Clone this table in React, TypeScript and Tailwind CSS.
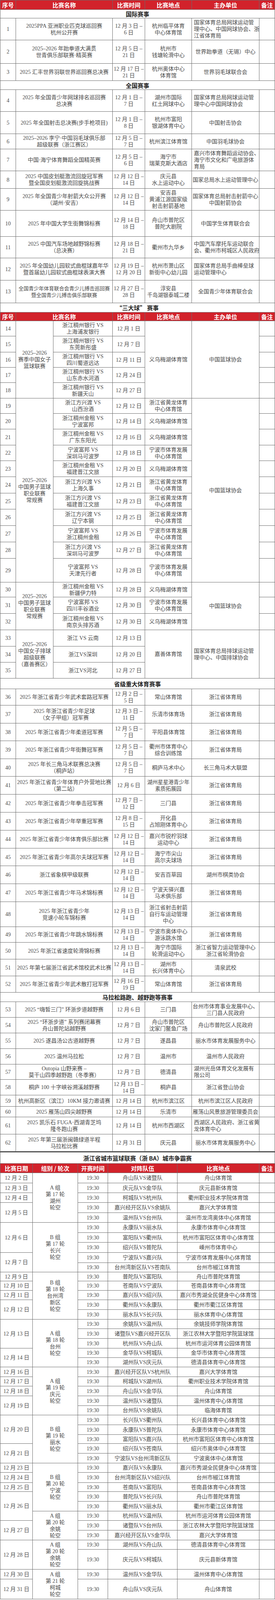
type Cell = { t: string; cs?: number; rs?: number; left?: boolean; sz?: string };
type Row = { h: number; kind?: "head" | "sec"; cells: Cell[] };

// the page window is 4096px tall, the sheet is 4487px: squeeze row heights to fit
const K = 4096 / 4487;

const c = (t: string, o: Omit<Cell, "t"> = {}): Cell => ({ t, ...o });
const N = (o: Omit<Cell, "t"> = {}): Cell => c("", o);

// plain row: number, name over two columns, time, venue, organiser, note
function std(
  h: number,
  no: string,
  name: string,
  time: string,
  venue: string,
  org: string,
  o: { left?: boolean; nameSz?: string; venueSz?: string; orgSz?: string } = {}
): Row {
  return {
    h,
    cells: [
      c(no),
      c(name, { cs: 2, sz: o.nameSz }),
      c(time),
      c(venue, { sz: o.venueSz }),
      c(org, { left: o.left, sz: o.orgSz }),
      N(),
    ],
  };
}

const head = (h: number): Row => ({
  h,
  kind: "head",
  cells: [c("序号"), c("比赛名称", { cs: 2 }), c("比赛时间"), c("比赛地点"), c("主办单位"), c("备注")],
});
const sec = (h: number, t: string, cs = 7): Row => ({ h, kind: "sec", cells: [c(t, { cs })] });

const G1 = "2025–2026\n赛季中国女子\n篮球联赛";
const G2 = "2025–2026\n中国男子篮球\n职业联赛\n常规赛";
const G3 = "2025–2026\n中国女子排球\n超级联赛\n（嘉善赛区）";
const YW = "义乌梅湖体育馆";
const HL = "浙江省黄龙体育\n中心体育馆";
const NB = "宁波市体育发展\n中心体育馆";
const JU = "浙江省体育局";
const D1214 = "12 月 12 日 –\n14 日";
const D1314 = "12 月 13 日 –\n14 日";

const mainRows: Row[] = [
  head(26),
  sec(24, "国际赛事"),
  std(62, "1", "2025PPA 亚洲职业匹克球巡回赛\n杭州公开赛", "12 月 3 日 –\n6 日", "杭州临平体育\n中心体育馆", "国家体育总局网球运动管\n理中心、中国网球协会、浙\n江省体育局", { left: true }),
  std(66, "2", "2025–2026 年跆拳道大满贯\n世青俱乐部联赛·精英赛", "12 月 5 日 –\n21 日", "杭州市\n钱塘轮滑中心", "世界跆拳道（无锡）中心"),
  std(48, "3", "2025 汇丰世界羽联世界巡回赛总决赛", "12 月 17 日 –\n21 日", "杭州奥体中心\n体育馆", "世界羽毛球联合会"),
  sec(25, "全国赛事"),
  std(61, "4", "2025 年全国青少年网球排名巡回赛\n总决赛", "12 月 1 日 –\n7 日", "湖州市国际\n红土网球中心", "国家体育总局网球运动管\n理中心中国网球协会", { left: true }),
  std(63, "5", "2025 年全国射击总决赛(步手枪项目)", "12 月 1 日 –\n8 日", "杭州市富阳\n银湖体育中心", "中国射击协会"),
  std(42, "6", "2025–2026 李宁·中国羽毛球俱乐部\n超级联赛（浙江赛区）", "12 月 5 日 –\n7 日", "杭州滨江体育馆", "中国羽毛球协会"),
  std(62, "7", "中国·海宁体育舞蹈全国精英赛", "12 月 5 日 –\n6 日", "海宁市\n瑞莱克斯大酒店", "嘉兴市体育舞蹈运动协会、\n海宁市文化和广电旅游体\n育局", { left: true }),
  std(49, "8", "2025 中国皮划艇激流回旋冠军赛\n暨全国皮划艇激流回旋挑战赛", D1214, "庆元县\n水上运动中心", "国家总局水上运动管理中心"),
  std(62, "9", "2025 年全国青少年射箭大众公开赛\n（湖州·安吉）", D1214, "安吉县\n黄浦江源国家级\n射击射箭基地", "国家体育总局射击射箭中心\n中国射箭协会"),
  std(73, "10", "2025 年中国大学生街舞锦标赛", "12 月 14 日 –\n18 日", "舟山市普陀区\n普陀大剧院", "中国学生体育联合会"),
  std(60, "11", "2025 中国汽车场地越野锦标赛\n（总决赛）", "12 月 18 日 –\n21 日", "衢州市九华乡", "中国汽车摩托车运动联合\n会、衢州市柯城区人民政府", { left: true }),
  std(63, "12", "2025 年全国幼儿园软式曲棍球嘉年华\n暨首届幼儿园软式曲棍球表演大赛", "12 月 19 日 –\n12 月 20 日", "杭州市萧山区\n新街中心幼儿园", "国家体育总局手曲棒垒球\n运动管理中心", { left: true }),
  std(63, "13", "全国青少年体育联合会青少儿搏击巡回赛\n暨全国青少儿搏击俱乐部联赛", "12 月 27 日 –\n28 日", "淳安县\n千岛湖银泰城二楼", "全国青少年体育联合会", { nameSz: "text-[13px]", venueSz: "text-[13.5px]" }),
  sec(26, "“三大球” 赛事"),
  head(25),
  { h: 42, cells: [c("14"), c(G1, { rs: 5 }), c("浙江稠州银行 VS\n上海浦发银行"), c("12 月 1 日"), c(YW, { rs: 5 }), c("中国篮球协会", { rs: 5 }), N()] },
  { h: 45, cells: [c("15"), c("浙江稠州银行 VS\n东莞新彤盛"), c("12 月 7 日"), N()] },
  { h: 43, cells: [c("16"), c("浙江稠州银行 VS\n四川蜀道远达"), c("12 月 11 日"), N()] },
  { h: 43, cells: [c("17"), c("浙江稠州银行 VS\n山东赤水河酒"), c("12 月 24 日"), N()] },
  { h: 43, cells: [c("18"), c("浙江稠州银行 VS\n新疆天山"), c("12 月 27 日"), N()] },
  { h: 43, cells: [c("19"), c(G2, { rs: 11 }), c("浙江方兴渡 VS\n山西汾酒"), c("12 月 12 日"), c(HL), c("中国篮球协会", { rs: 11 }), N()] },
  { h: 44, cells: [c("20"), c("浙江稠州金租 VS\n宁波富邦"), c("12 月 14 日"), c(YW), N()] },
  { h: 45, cells: [c("21"), c("浙江稠州金租 VS\n广东东阳光"), c("12 月 16 日"), c(YW), N()] },
  { h: 44, cells: [c("22"), c("宁波富邦 VS\n深圳马可波罗"), c("12 月 18 日"), c(NB), N()] },
  { h: 45, cells: [c("23"), c("浙江稠州金租 VS\n福建晋江文旅"), c("12 月 20 日"), c(YW), N()] },
  { h: 46, cells: [c("24"), c("浙江方兴渡 VS\n上海久事"), c("12 月 21 日"), c(HL), N()] },
  { h: 45, cells: [c("25"), c("浙江方兴渡 VS\n福建晋江文旅"), c("12 月 23 日"), c(HL), N()] },
  { h: 46, cells: [c("26"), c("浙江方兴渡 VS\n辽宁本钢"), c("12 月 25 日"), c(HL), N()] },
  { h: 45, cells: [c("27"), c("宁波富邦 VS\n浙江稠州金租"), c("12 月 26 日"), c(NB), N()] },
  { h: 46, cells: [c("28"), c("浙江方兴渡 VS\n深圳马可波罗"), c("12 月 27 日"), c(HL), N()] },
  { h: 67, cells: [c("29"), c("宁波富邦 VS\n天津先行者"), c("12 月 28 日"), c(NB), N()] },
  { h: 42, cells: [c("30"), c(G2, { rs: 3 }), c("浙江稠州金租 VS\n新疆伊力特"), c("12 月 28 日"), c(YW), c("中国篮球协会", { rs: 3 }), N()] },
  { h: 46, cells: [c("31"), c("宁波富邦 VS\n四川丰谷酒业"), c("12 月 30 日"), c(NB), N()] },
  { h: 46, cells: [c("32"), c("浙江稠州金租 VS\n南京头排苏酒"), c("12 月 30 日"), c(YW), N()] },
  { h: 46, cells: [c("33"), c(G3, { rs: 3 }), c("浙江 VS 云南"), c("12 月 13 日"), c("嘉善体育馆", { rs: 3 }), c("国家体育总局排球运动管\n理中心、中国排球协会", { rs: 3, left: true }), N({ rs: 3 })] },
  { h: 45, cells: [c("34"), c("浙江VS深圳"), c("12 月 20 日")] },
  { h: 45, cells: [c("35"), c("浙江VS河北"), c("12 月 27 日")] },
  sec(29, "省级重大体育赛事"),
  std(46, "36", "2025 年浙江省青少年武术套路冠军赛", "12 月 2 日 –\n5 日", "常山体育馆", JU),
  std(51, "37", "2025 年浙江省青少年足球\n（女子甲组）冠军赛", "12 月 3 日 –\n11 日", "乐清市体育场", JU),
  std(49, "38", "2025 年浙江省青少年柔道冠军赛", "12 月 5 日 –\n7 日", "平阳县体育馆", JU),
  std(50, "39", "2025 年浙江省青少年街舞冠军赛", "12 月 5 日 –\n7 日", "衢州市体育中心\n综合训练馆", JU),
  std(50, "40", "2025 年长三角马术联赛总决赛\n（桐庐站）", "12 月 5 日 –\n7 日", "桐庐马术中心", "长三角马术大联盟"),
  std(50, "41", "2025 年浙江省青少年体育户外营地比赛\n（第二站）", "12 月 6 日", "湖州星星港青少年\n素质拓展园", JU, { venueSz: "text-[13.5px]" }),
  std(51, "42", "2025 年浙江省青少年拳击冠军赛", "12 月 7 日 –\n12 日", "三门县", JU),
  std(50, "43", "2025 年浙江省青少年举重冠军赛", "12 月 8 日 –\n15 日", "开化县\n占旭刚体育中心", JU),
  std(50, "44", "2025 年浙江省青少年体育俱乐部比赛", D1214, "嘉兴市锐柠羽球\n运动中心", JU),
  std(50, "45", "2025 年浙江省青少年高尔夫球冠军赛", D1214, "海宁市尖山\n高尔夫球场", JU),
  std(50, "46", "浙江省象棋甲级联赛", D1214, "安吉百草园", "湖州市棋类协会"),
  std(50, "47", "2025 年浙江省青少年马术锦标赛", D1214, "宁波天驿兴嘉\n马术俱乐部", JU),
  std(71, "48", "2025 年浙江省青少年\n竞速小轮车锦标赛", D1314, "浙江省射击射箭\n自行车运动管理\n中心", JU),
  std(43, "49", "2025 年浙江省青少年跳水锦标赛", D1314, "宁波市奥体中心\n游泳跳水馆", JU),
  std(47, "50", "2025 年浙江省速度轮滑锦标赛", D1314, "海宁市国际\n轮滑运动中心", "浙江省智力运动管理中心\n浙江省轮滑协会"),
  std(48, "51", "2025 年第七届浙江省武术馆校武术比赛", D1314, "湖州市\n长兴体育中心", "清泉武校"),
  std(46, "52", "2025 年浙江省青少年武术散打冠军赛", "12 月 16 日 –\n19 日", "常山体育馆", JU),
  sec(26, "马拉松路跑、越野跑等赛事"),
  std(44, "53", "2025 “嗨皙三门” 环浙步道越野赛", "12 月 6 日", "三门县", "台州市体育事业发展中心、\n三门县人民政府"),
  std(44, "54", "2025 “环浙步道” 系列赛闭幕赛\n舟山普陀站越野赛", "12 月 7 日", "舟山市普陀区\n沈家门鳌鱼广场", "舟山市普陀区人民政府"),
  std(43, "55", "2025 遂昌汤公古道越野赛", "12 月 7 日", "遂昌县", "丽水市体育发展服务中心"),
  std(44, "56", "2025 温州马拉松", "12 月 7 日", "温州市", "温州市人民政府"),
  std(43, "57", "Outopia 山野来赛 –\n莫干山四季越野跑（冬季赛）", "12 月 7 日", "德清县", "湖州光岳体育文化发展有\n限公司", { left: true }),
  std(44, "58", "桐庐 100 十字峡谷溯溪越野赛", "12 月 13 日 –\n14 日", "桐庐县", "浙江省登山协会"),
  std(31, "59", "杭州高新区（滨江）10KM 接力邀请赛", "12 月 14 日", "杭州市滨江区", "杭州市滨江区人民政府"),
  std(30, "60", "2025 雁荡山四尖越野赛", "12 月 14 日", "乐清市", "雁荡山风景旅游管理委员会"),
  std(48, "61", "2025 凯乐石 FUGA·西湖青芝坞\n隆冬跑山赛", "12 月 14 日", "杭州市西湖区", "西湖区人民政府、浙江省黄\n龙体育中心", { left: true }),
  std(48, "62", "2025 年第三届浙闽赣绿道半程\n马拉松比赛", "12 月 31 日", "庆元县", "丽水市体育发展服务中心"),
];

// 浙BA schedule: d = date cell [text, rows], g = group cell [text, rows]
type Game = { h: number; d?: [string, number]; g?: [string, number]; m: string; v: string };

const games: Game[] = [
  { h: 28, d: ["12 月 2 日", 1], g: ["A 组\n第 17 轮\n湖州\n轮空", 5], m: "舟山队VS诸暨队", v: "舟山体育馆" },
  { h: 27, d: ["12 月 3 日", 1], m: "庆元队VS金华队", v: "庆元县新体育馆" },
  { h: 28, d: ["12 月 4 日", 1], m: "柯城队VS杭州队", v: "衢州职业技术学院体育馆" },
  { h: 28, d: ["12 月 5 日", 2], m: "嘉兴经开区队VS余姚队", v: "嘉兴大学体育馆" },
  { h: 28, m: "温州队VS台州队", v: "温州市龙湾奥体中心体育馆" },
  { h: 28, d: ["12 月 6 日", 3], g: ["B 组\n第 17 轮\n长兴\n轮空", 5], m: "永康队VS丽水队", v: "永康市体育中心体育馆" },
  { h: 28, m: "富阳队VS衢州队", v: "杭州市富阳区体育中心体育馆" },
  { h: 28, m: "绍兴队VS普陀队", v: "嵊州市体育中心" },
  { h: 28, d: ["12 月 7 日", 2], m: "宁波队VS嘉兴队", v: "宁波市体育发展中心体育馆" },
  { h: 27, m: "台州湾新区队VS苍南队", v: "台州市椒江体育馆" },
  { h: 25, d: ["12 月 9 日", 1], g: ["B 组\n第 18 轮\n台州湾\n新区\n轮空", 5], m: "普陀队VS富阳队", v: "舟山市普陀体育馆" },
  { h: 26, d: ["12 月 10 日", 1], m: "苍南队VS宁波队", v: "苍南县体育中心体育馆" },
  { h: 27, d: ["12 月 11 日", 1], m: "嘉兴队VS绍兴队", v: "嘉兴市秀湖全民健身中心体育馆" },
  { h: 27, d: ["12 月 12 日", 2], m: "衢州队VS永康队", v: "衢州市衢江区体育馆" },
  { h: 27, m: "丽水队VS长兴队", v: "丽水体育中心体育馆" },
  { h: 27, d: ["12 月 13 日", 3], g: ["A 组\n第 18 轮\n台州\n轮空", 5], m: "余姚队VS温州队", v: "余姚技师学院体育馆" },
  { h: 27, m: "诸暨队VS嘉兴经开区队", v: "浙江农林大学暨阳学院篮球馆" },
  { h: 27, m: "杭州队VS舟山队", v: "杭州市运河体育公园体育馆" },
  { h: 27, d: ["12 月 14 日", 2], m: "金华队VS柯城队", v: "金华市体育中心体育馆" },
  { h: 26, m: "湖州队VS庆元队", v: "德清县体育中心体育馆" },
  { h: 27, d: ["12 月 16 日", 1], g: ["A 组\n第 19 轮\n庆元\n轮空", 5], m: "嘉兴经开区队VS杭州队", v: "嘉兴大学体育馆" },
  { h: 27, d: ["12 月 17 日", 1], m: "柯城队VS湖州队", v: "衢州职业技术学院体育馆" },
  { h: 27, d: ["12 月 18 日", 1], m: "舟山队VS金华队", v: "舟山体育馆" },
  { h: 27, d: ["12 月 19 日", 2], m: "温州队VS诸暨队", v: "温州体育中心体育馆" },
  { h: 27, m: "台州队VS余姚队", v: "临海体育馆" },
  { h: 27, d: ["12 月 20 日", 3], g: ["B 组\n第 19 轮\n丽水\n轮空", 5], m: "长兴队VS衢州队", v: "长兴县体育中心体育馆" },
  { h: 27, m: "永康队VS普陀队", v: "永康市体育中心体育馆" },
  { h: 26, m: "富阳队VS嘉兴队", v: "杭州市富阳区体育中心体育馆" },
  { h: 27, d: ["12 月 21 日", 2], m: "绍兴队VS苍南队", v: "绍兴市奥体中心体育馆" },
  { h: 27, m: "宁波队VS台州湾新区队", v: "宁波奥体中心体育馆" },
  { h: 27, d: ["12 月 23 日", 1], g: ["B 组\n第 20 轮\n宁波\n轮空", 5], m: "嘉兴队VS永康队", v: "嘉兴市秀湖全民健身中心体育馆" },
  { h: 28, d: ["12 月 24 日", 1], m: "台州湾新区队VS绍兴队", v: "台州市椒江体育馆" },
  { h: 26, d: ["12 月 25 日", 1], m: "苍南队VS富阳队", v: "苍南县体育中心体育馆" },
  { h: 27, d: ["12 月 26 日", 3], m: "普陀队VS长兴队", v: "舟山市普陀体育馆" },
  { h: 27, m: "衢州队VS丽水队", v: "衢州市衢江区体育馆" },
  { h: 26, g: ["A 组\n第 20 轮\n余姚\n轮空", 3], m: "杭州队VS温州队", v: "杭州市运河体育公园体育馆" },
  { h: 28, d: ["12 月 27 日", 2], m: "诸暨队VS台州队", v: "浙江农林大学暨阳学院篮球馆" },
  { h: 27, m: "嘉兴经开区队VS金华队", v: "嘉兴大学体育馆" },
  { h: 27, d: ["12 月 28 日", 2], g: ["A 组\n第 20 轮\n余姚\n轮空", 2], m: "湖州队VS舟山队", v: "德清县体育中心体育馆" },
  { h: 56, m: "庆元队VS柯城队", v: "庆元县新体育馆" },
  { h: 27, d: ["12 月 30 日", 1], g: ["A 组\n第 21 轮\n柯城\n轮空", 2], m: "温州队VS金华队", v: "温州体育中心体育馆" },
  { h: 56, d: ["12 月 31 日", 1], m: "舟山队VS庆元队", v: "舟山体育馆" },
];

const baRows: Row[] = [
  sec(31, "浙江省城市篮球联赛（浙 BA）城市争霸赛", 6),
  {
    h: 27,
    kind: "head",
    cells: [c("比赛日期"), c("组别 / 轮次"), c("开赛时间"), c("对阵队伍"), c("比赛地点"), c("备注")],
  },
  ...games.map((g): Row => {
    const cells: Cell[] = [];
    if (g.d) cells.push(c(g.d[0], { rs: g.d[1] }));
    if (g.g) cells.push(c(g.g[0], { rs: g.g[1] }));
    cells.push(c("19:30"), c(g.m), c(g.v), N());
    return { h: g.h, cells };
  }),
];

type Placed = { cell: Cell; kind: Row["kind"]; row: number; col: number; cs: number; rs: number };

// work out grid positions the way a table does with rowspan / colspan
function place(rows: Row[]): Placed[] {
  const taken: boolean[][] = [];
  const out: Placed[] = [];
  rows.forEach((r, ri) => {
    let col = 0;
    r.cells.forEach((cell) => {
      while (taken[ri]?.[col]) col++;
      const cs = cell.cs ?? 1;
      const rs = cell.rs ?? 1;
      for (let y = ri; y < ri + rs; y++) {
        taken[y] = taken[y] ?? [];
        for (let x = col; x < col + cs; x++) taken[y][x] = true;
      }
      out.push({ cell, kind: r.kind, row: ri, col, cs, rs });
      col += cs;
    });
  });
  return out;
}

// scaled track sizes, rounded on the running total so nothing drifts
function tracks(rows: Row[], start: number) {
  let y = start;
  return rows
    .map((r) => {
      const a = Math.round(y * K);
      y += r.h;
      return `${Math.round(y * K) - a}px`;
    })
    .join(" ");
}

function cellClass(p: Placed) {
  const base = "flex flex-col justify-center border-r border-b border-[#6b6b6b] overflow-visible";
  if (p.kind === "head")
    return `${base} items-center bg-[#d2222b] text-white font-bold text-[15px] font-['Noto_Sans_CJK_SC',sans-serif]`;
  if (p.kind === "sec")
    return `${base} items-center bg-white text-[#222222] font-bold text-[15px] font-['Noto_Sans_CJK_SC',sans-serif]`;
  return `${base} text-[#4a4a4a] ${p.cell.sz ?? "text-[14px]"} ${p.cell.left ? "items-start px-[5px]" : "items-center px-[2px]"}`;
}

function Grid({ rows, cols, start }: { rows: Row[]; cols: string; start: number }) {
  const placed = place(rows);
  return (
    <div className={`grid w-[705px] border-l border-[#6b6b6b] ${cols}`} style={{ gridTemplateRows: tracks(rows, start) }}>
      {placed.map((p, i) => (
        <div
          key={i}
          className={cellClass(p)}
          style={{ gridRow: `${p.row + 1} / span ${p.rs}`, gridColumn: `${p.col + 1} / span ${p.cs}` }}
        >
          {p.cell.t
            ? p.cell.t.split("\n").map((line, k) => (
                <div key={k} className="h-[17px] leading-[17px] whitespace-pre">
                  {line}
                </div>
              ))
            : null}
        </div>
      ))}
    </div>
  );
}

export default function App() {
  return (
    <div className="w-[705px] bg-white font-['Liberation_Serif','Noto_Sans_CJK_SC',serif]">
      <div className="border-t border-[#6b6b6b]">
        <Grid rows={mainRows} start={1} cols="grid-cols-[40px_96px_152px_83px_120px_173px_40px]" />
      </div>
      <div className="border-t-2 border-[#444444]">
        <Grid rows={baRows} start={3231} cols="grid-cols-[83px_116px_77px_178px_210px_40px]" />
      </div>
    </div>
  );
}
